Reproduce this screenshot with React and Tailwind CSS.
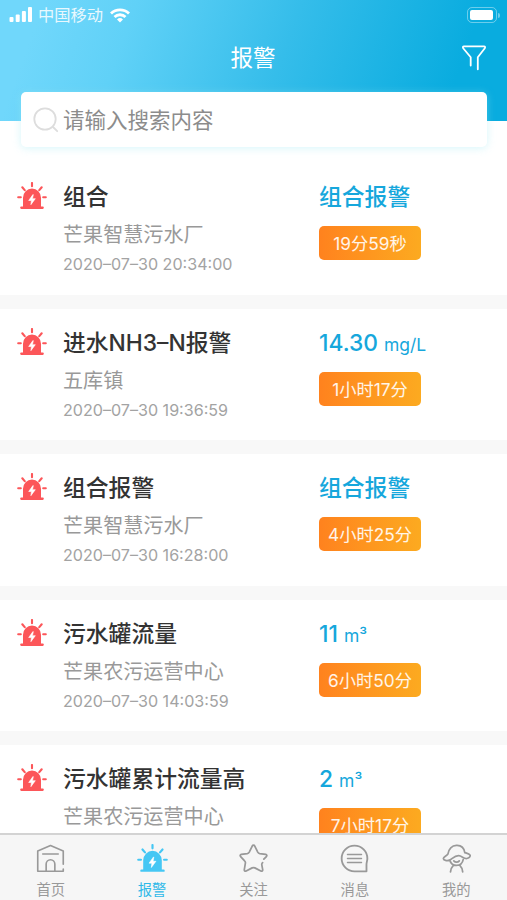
import { useState } from "react";

const alarms = [
  { id: 1, name: "组合", site: "芒果智慧污水厂", time: "2020–07–30 20:34:00", value: "组合报警", unit: "", duration: "19分59秒" },
  { id: 2, name: "进水NH3–N报警", site: "五库镇", time: "2020–07–30 19:36:59", value: "14.30", unit: "mg/L", duration: "1小时17分" },
  { id: 3, name: "组合报警", site: "芒果智慧污水厂", time: "2020–07–30 16:28:00", value: "组合报警", unit: "", duration: "4小时25分" },
  { id: 4, name: "污水罐流量", site: "芒果农污运营中心", time: "2020–07–30 14:03:59", value: "11", unit: "m³", duration: "6小时50分" },
  { id: 5, name: "污水罐累计流量高", site: "芒果农污运营中心", time: "", value: "2", unit: "m³", duration: "7小时17分" },
];

const SirenIcon = ({ className }) => (
  <svg viewBox="0 0 30 28" className={className} fill="none">
    <path d="M6 24.600V15.800a9 9.200 0 0 1 18 0V24.600h1.700a1.100 1.100 0 0 1 0 2.300H4.300a1.100 1.100 0 0 1 0-2.300Z" fill="currentColor" />
    <path d="M15 1v3.200M5.300 5.300l2.400 2.800M24.700 5.300l-2.400 2.800M1.200 15.200h2.600M26.200 15.200h2.600" stroke="currentColor" strokeWidth="2.1" strokeLinecap="round" />
    <path d="m15.900 12.600-4.200 5.900h2.700l-.5 4.200 4.400-6h-2.800l.8-4Z" fill="white" stroke="white" strokeWidth=".6" strokeLinejoin="round" />
  </svg>
);

const HomeIcon = ({ className }) => (
  <svg viewBox="0 0 30 30" className={className} fill="none" stroke="currentColor" strokeWidth="1.7" strokeLinecap="round" strokeLinejoin="round">
    <path d="M28.2 21V7.3L15 1.6 1.8 7.3v20.9h26.4V26M7 10.3h16M10.5 28v-7.2a4.500 4.500 0 0 1 9 0V28" />
  </svg>
);

const StarIcon = ({ className }) => (
  <svg viewBox="0 0 30 30" className={className} fill="none" stroke="currentColor" strokeWidth="1.8" strokeLinecap="round" strokeLinejoin="round">
    <path d="M24.4 19.3c-.8.8-1 1.3-.8 2.3l.9 5c.2 1.3-.8 1.9-1.9 1.3l-6.2-3.2c-1-.5-1.8-.5-2.8 0l-6.2 3.2c-1.1.6-2.1-.1-1.9-1.3l1.1-6.8c.2-1-.1-1.7-.8-2.4L1.7 13c-.9-.9-.5-2 .7-2.2l6.1-.9c1-.2 1.6-.6 2.1-1.5l3.1-6.3c.6-1.1 2-1.1 2.6 0l3.1 6.3c.5.9 1.1 1.3 2.1 1.5l6.1.9c1.2.2 1.6 1.3.7 2.2l-2.6 2.7" />
  </svg>
);

const MessageIcon = ({ className }) => (
  <svg viewBox="0 0 30 30" className={className} fill="none" stroke="currentColor" strokeLinecap="round" strokeLinejoin="round">
    <path d="M15 28.3A13.3 13.3 0 1 1 28.3 15c0 2.4-.9 4-.9 6.2v7.1H15Z" strokeWidth="1.9" />
    <path d="M7.7 10.9h14.6M7.7 15h14.6M7.7 19.1h14.6" strokeWidth="1.4" />
  </svg>
);

const ProfileIcon = ({ className }) => (
  <svg viewBox="0 0 30 30" className={className} fill="none" stroke="currentColor" strokeWidth="1.8" strokeLinecap="round" strokeLinejoin="round">
    <path d="M6.1 10.4c.9-5 4.2-8.8 8.8-9 5.1-.3 8 3.1 8.7 7.5 1.8.6 4.500 1.100 5.500 2.600.3 2-1.400 3.300-3.400 3.500-3.400.3-5.100-2.800-8.500-2.900-4.600-.1-6.600 3.500-9.400 4.600-2.500 1-6.400.2-6.400-1.700.2-1.900 3-2.300 4.700-4.600" />
    <path d="M8.2 17.2c1 3.3 3.5 5 6.9 5 3.6 0 6.1-2.4 6.9-6.3M12.2 17.5c1.6 1.8 4.1 1.8 5.700 0M11.600 22.400c-1.700 1.700-2.600 3.900-2.800 6.400M18.600 22.400c1.800 1.700 2.600 3.900 2.800 6.400" />
  </svg>
);

const FilterIcon = () => (
  <svg viewBox="0 0 24 26" className="h-[26px] w-6" fill="none" stroke="white" strokeWidth="1.8" strokeLinecap="round" strokeLinejoin="round">
    <path d="M8.7 20.5v-8.2L1.2 3.2C.7 2.2.9 1.3 2 1.3h20c1.1 0 1.3.9.8 1.9l-7 9.100v12" />
  </svg>
);

const tabs = [
  { label: "首页", Icon: HomeIcon },
  { label: "报警", Icon: SirenIcon },
  { label: "关注", Icon: StarIcon },
  { label: "消息", Icon: MessageIcon },
  { label: "我的", Icon: ProfileIcon },
];

const StatusBar = () => (
  <div className="flex h-[30px] items-center pl-[9px] pr-[7px] text-white">
    <svg viewBox="0 0 24 16" className="h-4 w-6" fill="currentColor">
      <rect x=".5" y="10" width="4" height="5" rx="1" />
      <rect x="6.7" y="7.5" width="4" height="7.5" rx="1" />
      <rect x="12.9" y="4" width="4" height="11" rx="1" />
      <rect x="19" y="0" width="4" height="15" rx="1" />
    </svg>
    <span className="ml-[5px] text-[16.3px] leading-[30px] opacity-85">中国移动</span>
    <svg viewBox="0 0 20 15" className="ml-[7px] h-[15px] w-5" fill="none" stroke="currentColor" strokeWidth="2.8">
      <path d="M1 5.5a12.8 12.8 0 0 1 18 0M4.5 9a7.8 7.8 0 0 1 11 0" />
      <path d="m7 11.5a4.3 4.3 0 0 1 6 0l-3 3Z" fill="currentColor" stroke="none" />
    </svg>
    <div className="ml-auto flex items-center">
      <div className="h-4 w-[30px] rounded-[5px] border border-white/40 p-0.5">
        <div className="h-full w-[23px] rounded-[2px] bg-white" />
      </div>
      <div className="ml-px h-[5px] w-[2px] rounded-r bg-white/40" />
    </div>
  </div>
);

const AlarmCard = ({ alarm }) => (
  <div className="flex h-[131.6px] shrink-0 bg-white pt-[19px]">
    <div className="w-[63px] shrink-0 pl-[17px]">
      <SirenIcon className="h-[28px] w-[30px] text-[#fc5659]" />
    </div>
    <div className="w-[256px] shrink-0">
      <h2 className="h-[30px] text-[22.8px] font-medium leading-[30px] text-[#333]">{alarm.name}</h2>
      <p className="mt-2 h-[30px] text-[20.1px] leading-[30px] text-[#999]">{alarm.site}</p>
      {alarm.time && <p className="mt-1 h-5 text-[16.1px] leading-5 text-[#a3a3a3]">{alarm.time}</p>}
    </div>
    <div>
      <div className="flex h-[30px] items-baseline gap-1.5 leading-[30px] text-[#16a7dc]">
        <span className="text-[22.8px] font-medium">{alarm.value}</span>
        {alarm.unit && <span className="text-[17.5px]">{alarm.unit}</span>}
      </div>
      <div className="mt-[14px] h-[34px] w-[102px] rounded-[5px] bg-linear-to-r from-[#ff821e] to-[#fcaa20] pt-px text-center text-[17.3px] leading-[34px] text-white/90">
        {alarm.duration}
      </div>
    </div>
  </div>
);

export default function App() {
  const [active, setActive] = useState("报警");

  return (
    <div className="flex h-[900px] w-[507px] flex-col overflow-hidden whitespace-nowrap bg-white font-['Inter','Noto_Sans_CJK_SC',sans-serif]">
      <header className="h-[121px] shrink-0 bg-[linear-gradient(110deg,#70d7fb_8%,#60d1f7_25%,#35bdea_55%,#09acdf_88%)]">
        <StatusBar />
        <div className="grid h-[54px] grid-cols-3 items-center pl-5 pr-[21px]">
          <h1 className="col-start-2 text-center text-[22.5px] leading-[56px] text-white">报警</h1>
          <button className="justify-self-end" aria-label="筛选">
            <FilterIcon />
          </button>
        </div>
        <div className="ml-[21px] mr-5 mt-2 flex h-[55px] items-center rounded-[5px] bg-white pl-3 shadow-[0_1px_9px_rgba(150,232,242,0.4)]">
          <svg viewBox="0 0 26 26" className="size-[26px]" fill="none" stroke="#ddd" strokeWidth="1.8" strokeLinecap="round">
            <circle cx="12" cy="12" r="10.7" />
            <path d="m20 20 4.2 4.2" />
          </svg>
          <span className="ml-1 pt-px text-[21.5px] leading-[54px] text-[#8c8c8c]">请输入搜索内容</span>
        </div>
      </header>

      <main className="min-h-0 flex-1 overflow-hidden pt-[42px]">
        <div className="flex flex-col gap-[14px] bg-[#f8f8f8]">
          {alarms.map((alarm) => (
            <AlarmCard key={alarm.id} alarm={alarm} />
          ))}
        </div>
      </main>

      <nav className="grid h-[67px] shrink-0 grid-cols-5 border-t-2 border-[#d3d3d3] bg-[#f6f6f6]">
        {tabs.map(({ label, Icon }) => (
          <button
            key={label}
            onClick={() => setActive(label)}
            className={`flex flex-col items-center pt-[9px] ${active === label ? "text-[#2fb9e8]" : "text-[#999]"}`}
          >
            <Icon className={active === label ? "h-[29px] w-[31px] text-[#45c7f4]" : "size-[29px]"} />
            <span className="mt-[7px] text-[14.3px] leading-5">{label}</span>
          </button>
        ))}
      </nav>
    </div>
  );
}
